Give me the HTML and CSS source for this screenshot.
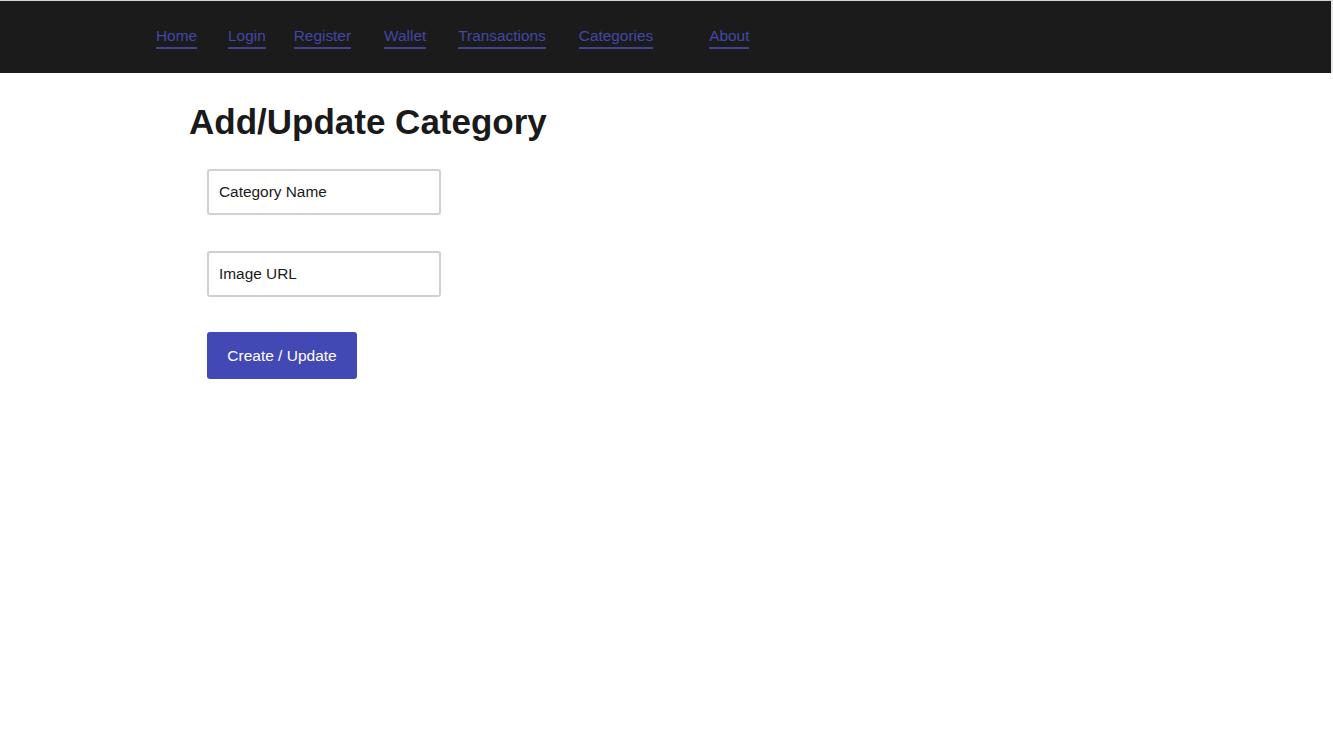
FILE: index.html
```html
<!DOCTYPE html>
<html lang="en">
<head>
<meta charset="utf-8">
<title>Add/Update Category</title>
<link rel="stylesheet" href="styles.css">
</head>
<body>
<nav class="topbar">
  <div class="container nav-links">
    <a href="#" class="nav-link">Home</a>
    <a href="#" class="nav-link">Login</a>
    <a href="#" class="nav-link">Register</a>
    <a href="#" class="nav-link">Wallet</a>
    <a href="#" class="nav-link">Transactions</a>
    <a href="#" class="nav-link">Categories</a>
    <a href="#" class="nav-link nav-about">About</a>
  </div>
</nav>
<main class="container content">
  <h1 class="title">Add/Update Category</h1>
  <form class="form">
    <input class="field" type="text" placeholder="Category Name">
    <input class="field" type="text" placeholder="Image URL">
    <button class="btn" type="button">Create / Update</button>
  </form>
</main>
</body>
</html>
```

FILE: styles.css
```css
* { box-sizing: border-box; }
html, body { margin: 0; padding: 0; background: #fff; }
body {
  font-family: "Liberation Sans", Arial, Helvetica, sans-serif;
  color: #1a1a1a;
}
.container {
  width: 1021px;
  margin: 0 auto;
}
.topbar {
  height: 73px;
  background: #1b1b1b;
  border-top: 1px solid #d4d4d4;
  border-right: 2px solid #e6e6e6;
}
.nav-links {
  display: flex;
  align-items: flex-start;
  padding-top: 26px;
  padding-left: 1px;
}
.nav-link {
  font-size: 15.4px;
  line-height: 18px;
  color: #4347a8;
  text-decoration: none;
  padding-bottom: 2px;
  border-bottom: 2px solid #3e4290;
  margin-right: 31px;
}
.nav-link:nth-child(2) { margin-right: 28px; }
.nav-link:nth-child(3) { margin-right: 33px; }
.nav-link:nth-child(4) { margin-right: 32px; }
.nav-link:nth-child(5) { margin-right: 33px; }
.nav-link:nth-child(6) { margin-right: 56px; }
.content {
  padding-left: 33px;
}
.title {
  margin: 29px 0 0 0;
  font-size: 35px;
  line-height: 40px;
  font-weight: 700;
  color: #1a1a1a;
}
.form {
  display: flex;
  flex-direction: column;
  align-items: flex-start;
  gap: 36px;
  padding-left: 18px;
  margin-top: 27px;
}
.field {
  width: 234px;
  height: 46px;
  border: 2px solid #d0d0d0;
  border-radius: 3px;
  padding: 0 10px;
  font-family: "Liberation Sans", Arial, sans-serif;
  font-size: 15.4px;
  color: #1a1a1a;
  background: #fff;
  outline: none;
}
.field::placeholder { color: #1a1a1a; opacity: 1; }
.btn {
  width: 150px;
  height: 47px;
  margin-top: -1px;
  border: none;
  border-radius: 3px;
  background: #4349b4;
  color: #fff;
  font-family: "Liberation Sans", Arial, sans-serif;
  font-size: 15.5px;
  padding: 0;
  cursor: pointer;
}
```
